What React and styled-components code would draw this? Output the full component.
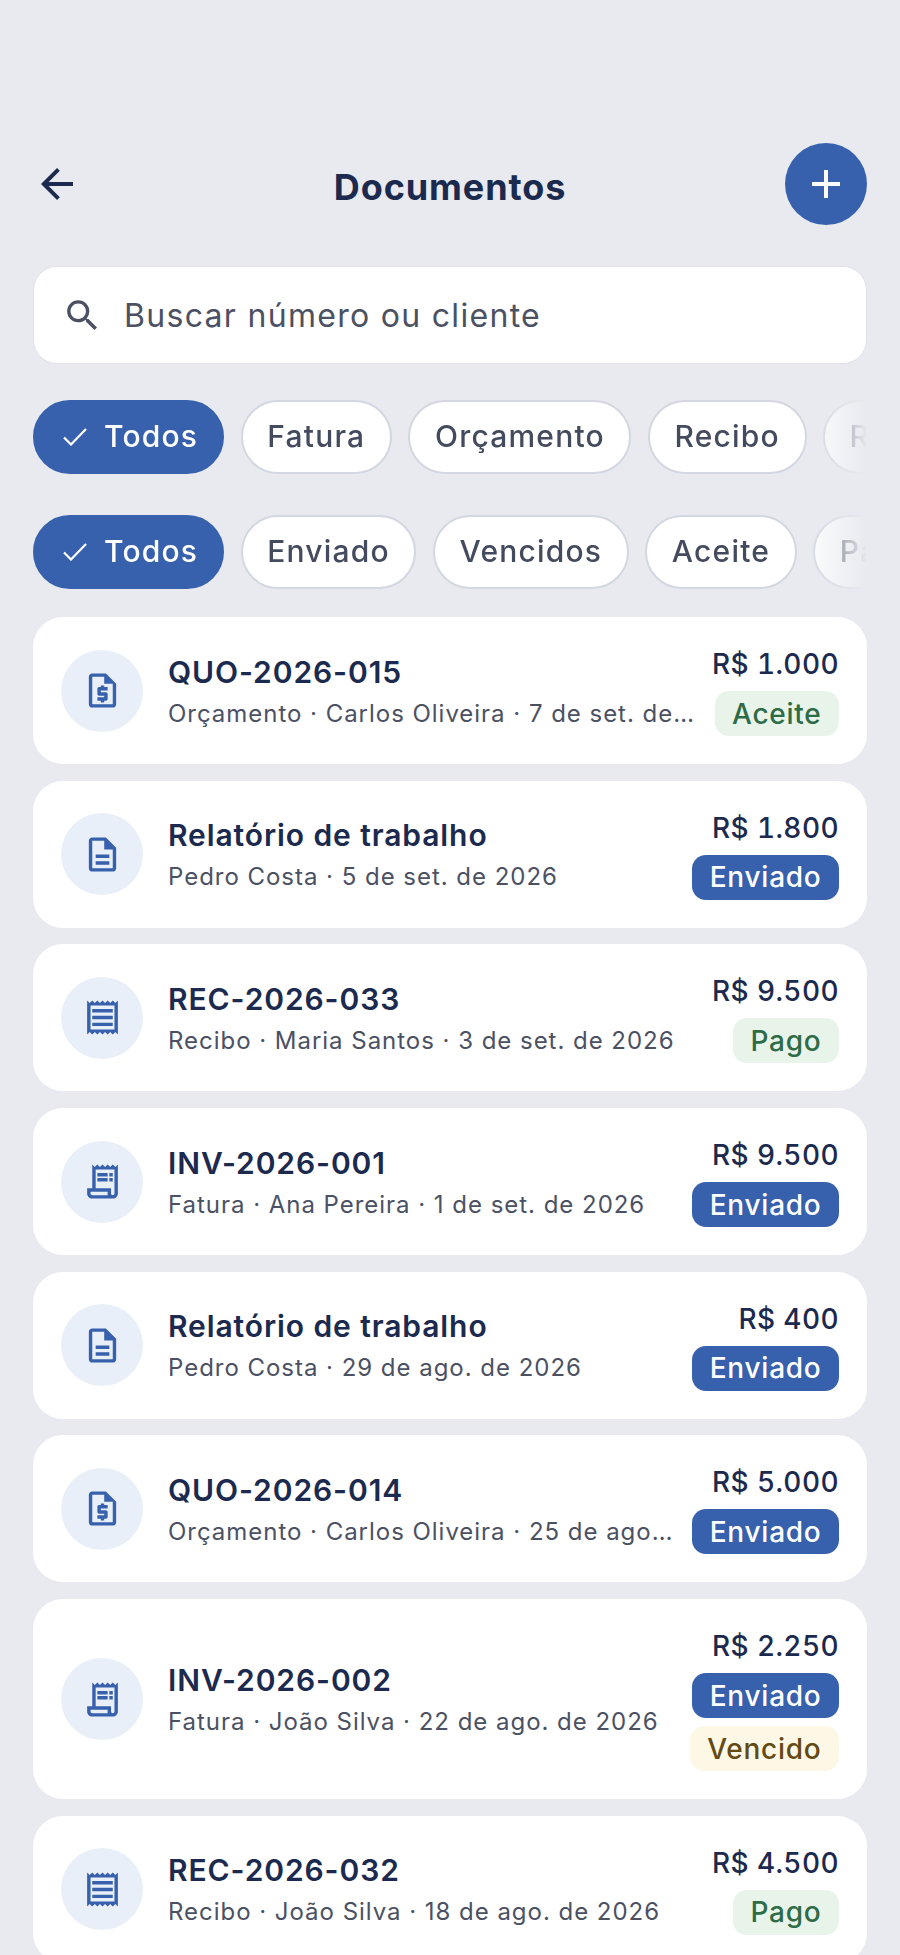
import React from "react";
import styled, { createGlobalStyle } from "styled-components";
import {
  MdAdd,
  MdArrowBack,
  MdOutlineDescription,
  MdOutlineReceipt,
  MdOutlineReceiptLong,
  MdOutlineRequestQuote,
  MdSearch,
} from "react-icons/md";

const NAVY = "#1b2a4e";
const BLUE = "#3861ad";

const documents = [
  { icon: "quote", title: "QUO-2026-015", sub: "Orçamento · Carlos Oliveira · 7 de set. de 2026", amount: "R$ 1.000", tags: ["Aceite"] },
  { icon: "report", title: "Relatório de trabalho", sub: "Pedro Costa · 5 de set. de 2026", amount: "R$ 1.800", tags: ["Enviado"] },
  { icon: "receipt", title: "REC-2026-033", sub: "Recibo · Maria Santos · 3 de set. de 2026", amount: "R$ 9.500", tags: ["Pago"] },
  { icon: "invoice", title: "INV-2026-001", sub: "Fatura · Ana Pereira · 1 de set. de 2026", amount: "R$ 9.500", tags: ["Enviado"] },
  { icon: "report", title: "Relatório de trabalho", sub: "Pedro Costa · 29 de ago. de 2026", amount: "R$ 400", tags: ["Enviado"] },
  { icon: "quote", title: "QUO-2026-014", sub: "Orçamento · Carlos Oliveira · 25 de ago. de 2026", amount: "R$ 5.000", tags: ["Enviado"] },
  { icon: "invoice", title: "INV-2026-002", sub: "Fatura · João Silva · 22 de ago. de 2026", amount: "R$ 2.250", tags: ["Enviado", "Vencido"] },
  { icon: "receipt", title: "REC-2026-032", sub: "Recibo · João Silva · 18 de ago. de 2026", amount: "R$ 4.500", tags: ["Pago"] },
];

const icons = {
  quote: MdOutlineRequestQuote,
  report: MdOutlineDescription,
  receipt: MdOutlineReceipt,
  invoice: MdOutlineReceiptLong,
};

const tagColors = {
  Aceite: { bg: "#e8f4ea", fg: "#2e6b47" },
  Pago: { bg: "#e8f4ea", fg: "#2e6b47" },
  Enviado: { bg: BLUE, fg: "#ffffff" },
  Vencido: { bg: "#fdf7e6", fg: "#634a12" },
};

const GlobalStyle = createGlobalStyle`
  html, body {
    margin: 0;
    height: 1955px;
    overflow: hidden;
    background: #e8eaef;
    font-family: Inter, "Liberation Sans", sans-serif;
  }
  * { box-sizing: border-box; }
`;

const Page = styled.main`
  padding: 143px 33px 0;
`;

const Header = styled.header`
  display: grid;
  grid-template-columns: 82px 1fr 82px;
  align-items: center;
  height: 82px;
`;

const BackButton = styled.button`
  all: unset;
  display: flex;
  color: ${NAVY};
  font-size: 48px;
`;

const Title = styled.h1`
  margin: 0;
  text-align: center;
  color: ${NAVY};
  font-size: 36px;
  font-weight: 700;
  letter-spacing: 0.9px;
  padding-top: 6px;
`;

const AddButton = styled.button`
  all: unset;
  width: 82px;
  height: 82px;
  border-radius: 50%;
  background: ${BLUE};
  color: #fff;
  display: flex;
  align-items: center;
  justify-content: center;
  font-size: 48px;
`;

const Search = styled.div`
  margin-top: 41px;
  height: 98px;
  background: #fff;
  border: 1px solid #dfe2ea;
  border-radius: 24px;
  display: flex;
  align-items: center;
  gap: 21px;
  padding-left: 28px;
  color: #4b5163;
  font-size: 32px;
  letter-spacing: 1.3px;
  svg { font-size: 41px; flex: none; }
`;

const ChipRow = styled.div`
  display: flex;
  gap: 16.5px;
  overflow: hidden;
  margin-top: ${({ $first }) => ($first ? "36px" : "41px")};
  mask-image: linear-gradient(to right, #000 92%, transparent 100%);
`;

const Chip = styled.span`
  flex: none;
  height: 74px;
  display: flex;
  align-items: center;
  gap: 17px;
  padding: 0 ${({ $active }) => ($active ? "24px" : "24.6px")} 2px ${({ $active }) => ($active ? "28px" : "24.6px")};
  border-radius: 37px;
  font-size: 30px;
  font-weight: 500;
  letter-spacing: 1.2px;
  color: ${({ $active }) => ($active ? "#fff" : "#454b5e")};
  background: ${({ $active }) => ($active ? BLUE : "#fff")};
  border: 2px solid ${({ $active }) => ($active ? BLUE : "#d3d7e2")};
`;

const CheckMark = styled.svg`
  width: 24px;
  height: 18px;
  margin-top: 2px;
  fill: none;
  stroke: currentColor;
  stroke-width: 2.2;
`;

const List = styled.section`
  margin-top: 28px;
  display: flex;
  flex-direction: column;
  gap: 16.7px;
`;

const Card = styled.article`
  display: flex;
  align-items: center;
  gap: 18px;
  padding: 28px;
  background: #fff;
  border-radius: 30px;
`;

const IconCircle = styled.div`
  flex: none;
  width: 82px;
  height: 82px;
  margin-right: 7px;
  border-radius: 50%;
  background: #e9eff9;
  color: ${BLUE};
  display: flex;
  align-items: center;
  justify-content: center;
  font-size: 41px;
`;

const Info = styled.div`
  flex: 1;
  min-width: 0;
`;

const DocTitle = styled.div`
  color: ${NAVY};
  font-size: 30px;
  font-weight: 600;
  line-height: 38px;
  letter-spacing: 0.9px;
`;

const DocSub = styled.div`
  margin-top: 8px;
  color: #4b5163;
  font-size: 24px;
  line-height: 30px;
  letter-spacing: 0.97px;
  white-space: nowrap;
  overflow: hidden;
  text-overflow: ellipsis;
`;

const Side = styled.div`
  flex: none;
  display: flex;
  flex-direction: column;
  align-items: flex-end;
  gap: 8px;
`;

const Amount = styled.div`
  padding-top: 1px;
  color: ${NAVY};
  font-size: 28px;
  font-weight: 500;
  line-height: 37px;
  letter-spacing: 0.4px;
  font-variant-numeric: tabular-nums;
`;

const Tag = styled.span`
  height: 45px;
  display: flex;
  align-items: center;
  padding: 0 17.5px;
  border-radius: 14px;
  font-size: 28px;
  font-weight: 500;
  letter-spacing: 0.75px;
  background: ${({ $status }) => tagColors[$status].bg};
  color: ${({ $status }) => tagColors[$status].fg};
`;

function Chips({ items, first }) {
  return (
    <ChipRow $first={first}>
      {items.map((label, i) => (
        <Chip key={label} $active={i === 0}>
          {i === 0 && (
            <CheckMark viewBox="0 0 24 18">
              <path d="M1 9.5 8 16.5 23 1" />
            </CheckMark>
          )}
          {label}
        </Chip>
      ))}
    </ChipRow>
  );
}

export default function App() {
  return (
    <Page>
      <GlobalStyle />
      <Header>
        <BackButton aria-label="Voltar">
          <MdArrowBack />
        </BackButton>
        <Title>Documentos</Title>
        <AddButton aria-label="Novo documento">
          <MdAdd />
        </AddButton>
      </Header>
      <Search>
        <MdSearch />
        Buscar número ou cliente
      </Search>
      <Chips first items={["Todos", "Fatura", "Orçamento", "Recibo", "Relatório"]} />
      <Chips items={["Todos", "Enviado", "Vencidos", "Aceite", "Pago"]} />
      <List>
        {documents.map((doc) => {
          const Icon = icons[doc.icon];
          return (
            <Card key={doc.title + doc.sub}>
              <IconCircle>
                <Icon />
              </IconCircle>
              <Info>
                <DocTitle>{doc.title}</DocTitle>
                <DocSub>{doc.sub}</DocSub>
              </Info>
              <Side>
                <Amount>{doc.amount}</Amount>
                {doc.tags.map((tag) => (
                  <Tag key={tag} $status={tag}>
                    {tag}
                  </Tag>
                ))}
              </Side>
            </Card>
          );
        })}
      </List>
    </Page>
  );
}
